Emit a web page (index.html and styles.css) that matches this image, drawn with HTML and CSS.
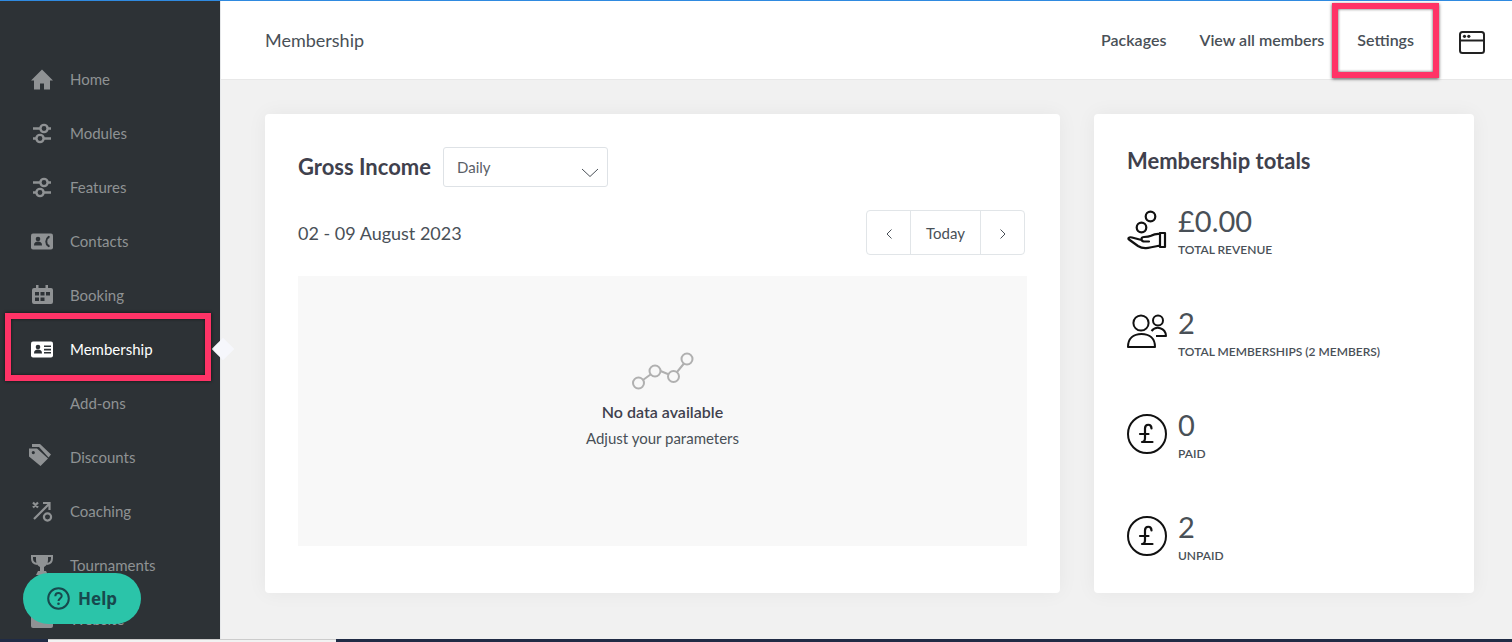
FILE: index.html
```html
<!DOCTYPE html>
<html lang="en">
<head>
<meta charset="utf-8">
<meta name="viewport" content="width=device-width, initial-scale=1">
<title>Membership</title>
<link rel="stylesheet" href="styles.css">
</head>
<body>
<svg class="sprite" aria-hidden="true">
  <symbol id="sliders" viewBox="0 0 22 22">
    <g fill="none" stroke="currentColor" stroke-width="2.400"><path d="M2 6.500h7M17 6.500h3M2 16.500h3M13 16.500h7"/><circle cx="13" cy="6.500" r="3.600"/><circle cx="9" cy="16.500" r="3.600"/></g>
  </symbol>
  <symbol id="pound" viewBox="0 0 40 40">
    <g fill="none" stroke="currentColor" stroke-width="2"><circle cx="20" cy="20" r="19"/><path d="M24.500 14.500c0-5-6.500-5-6.500 0v9.500c0 2.500-1 4-3 4h10.500M13 20h8.500" stroke-width="2.200" stroke-linecap="round" stroke-linejoin="round"/></g>
  </symbol>
</svg>
<div class="app">
  <aside class="sidebar">
    <nav class="nav" aria-label="Main">
      <a class="nav-item" href="#"><svg class="nav-icon" viewBox="0 0 22 22"><path fill="currentColor" d="M11 1.500 22 12.500h-3v9h-6v-6H9v6H3v-9H0z"/></svg>Home</a>
      <a class="nav-item" href="#"><svg class="nav-icon"><use href="#sliders"/></svg>Modules</a>
      <a class="nav-item" href="#"><svg class="nav-icon"><use href="#sliders"/></svg>Features</a>
      <a class="nav-item" href="#"><svg class="nav-icon" viewBox="0 0 22 22"><rect y="3.500" width="22" height="16" rx="2" fill="currentColor"/><g class="cut"><circle cx="7" cy="9" r="2.300"/><path d="M3 15.500c0-3 1.500-4 4-4s4 1 4 4z"/></g><path class="cut-line" d="M18.500 7.500 17.500 7c-3 2-3 7 0 9l1-.5"/></svg>Contacts</a>
      <a class="nav-item" href="#"><svg class="nav-icon" viewBox="0 0 22 22"><path fill="currentColor" d="M5 1h2.500v3h7V1H17v3h3a2 2 0 0 1 2 2v12a2 2 0 0 1-2 2H3a2 2 0 0 1-2-2V6a2 2 0 0 1 2-2h2z"/><path class="cut" d="M4 8h4v3.500H4zM9.500 8h4v3.500h-4zM15 8h4v3.500h-4zM4 13.500h4V17H4zM9.500 13.500h4V17h-4z"/></svg>Booking</a>
      <a class="nav-item nav-item-active" href="#" aria-current="page"><svg class="nav-icon" viewBox="0 0 22 22"><rect y="3.500" width="22" height="16" rx="2" fill="currentColor"/><g class="cut"><circle cx="7" cy="9" r="2.300"/><path d="M3 15.500c0-3 1.500-4 4-4s4 1 4 4zM13 7.500h7v1.600h-7zM13 10.800h7v1.600h-7zM13 14h7v1.600h-7z"/></g></svg>Membership</a>
      <a class="nav-item" href="#"><span class="nav-icon"></span>Add-ons</a>
      <a class="nav-item" href="#"><svg class="nav-icon nav-icon-tag" viewBox="0 0 22 22"><path fill="currentColor" fill-rule="evenodd" d="M0 4.500h8l11 10-7.500 7.500L0 12.500zM4.300 7a1.600 1.600 0 1 0 0 3.200 1.600 1.600 0 0 0 0-3.200z"/><path fill="currentColor" d="M3 0h8l11 10.500-2.500 3L10 3H3z"/></svg>Discounts</a>
      <a class="nav-item" href="#"><svg class="nav-icon" viewBox="0 0 22 22"><path fill="none" stroke="currentColor" stroke-width="2.200" d="M2 2.500l5 5M7 2.500l-5 5M3 19 18 4M12 3h6.500v7"/><circle cx="16.500" cy="17" r="3.600" fill="none" stroke="currentColor" stroke-width="2.200"/></svg>Coaching</a>
      <a class="nav-item" href="#"><svg class="nav-icon" viewBox="0 0 22 22"><path fill="currentColor" d="M5 1h12v5c0 4-2 6-4 7v4h2l2 4H5l2-4h2v-4c-2-1-4-3-4-7z"/><path d="M5 2H1v2.500c0 3 2 5 5 5.500M17 2h4v2.500c0 3-2 5-5 5.500" fill="none" stroke="currentColor" stroke-width="2"/></svg>Tournaments</a>
      <a class="nav-item" href="#"><svg class="nav-icon" viewBox="0 0 22 22"><rect y="2" width="22" height="18" rx="2" fill="currentColor"/></svg>Website</a>
    </nav>
  </aside>
  <div class="page">
    <header class="header">
      <h1 class="header-title">Membership</h1>
      <nav class="header-links" aria-label="Membership">
        <a class="header-link" href="#">Packages</a>
        <a class="header-link" href="#">View all members</a>
        <a class="header-link header-link-marked" href="#">Settings</a>
      </nav>
      <button class="window-button" type="button" aria-label="Open window"><svg class="window-icon" viewBox="0 0 26 23"><g fill="none" stroke="currentColor" stroke-width="2"><rect x="1" y="1" width="24" height="21" rx="2.500"/><path d="M1 9.500h24"/></g><circle cx="5.500" cy="5.300" r="1.600" fill="currentColor"/><circle cx="9.800" cy="5.300" r="1.600" fill="currentColor"/></svg></button>
    </header>
    <main class="content">
      <section class="card income">
        <div class="income-head">
          <label class="card-title" for="period">Gross Income</label>
          <span class="select-wrap">
            <select class="select" id="period"><option>Daily</option><option>Weekly</option><option>Monthly</option></select>
            <svg class="select-arrow" viewBox="0 0 16 10"><path d="M0 1l8 7.500L16 1" fill="none" stroke="currentColor"/></svg>
          </span>
        </div>
        <div class="income-range">
          <p class="range-label">02 - 09 August 2023</p>
          <div class="pager">
            <button class="pager-button" type="button" aria-label="Previous"><svg class="pager-icon" viewBox="0 0 6 10"><path d="M5.500 .5 1 5l4.500 4.500" fill="none" stroke="currentColor"/></svg></button>
            <button class="pager-button pager-today" type="button">Today</button>
            <button class="pager-button" type="button" aria-label="Next"><svg class="pager-icon" viewBox="0 0 6 10"><path d="M.5 .5 5 5 .5 9.500" fill="none" stroke="currentColor"/></svg></button>
          </div>
        </div>
        <div class="empty">
          <svg class="empty-icon" viewBox="0 0 62 38"><g fill="none" stroke="currentColor" stroke-width="2"><circle cx="6.500" cy="31" r="5.500"/><circle cx="23" cy="19" r="5.500"/><circle cx="41.500" cy="24.500" r="5.500"/><circle cx="55" cy="7" r="5.500"/><path d="M11 28l7.500-5.500M28.500 19l8.500 3.500M45 20l7-8.500"/></g></svg>
          <p class="empty-title">No data available</p>
          <p class="empty-text">Adjust your parameters</p>
        </div>
      </section>
      <section class="card totals">
        <h2 class="card-title">Membership totals</h2>
        <ul class="stats">
          <li class="stat"><svg class="stat-icon" viewBox="0 0 40 40"><g fill="none" stroke="currentColor" stroke-width="2.200" stroke-linejoin="round" stroke-linecap="round"><circle cx="23.500" cy="6.500" r="4.800"/><circle cx="14.500" cy="17.500" r="4.800"/><path d="M33 23h5v14h-5zM33 24c-4-.5-6 .2-9 1.800-2 1-4.500 1.200-7 1.200-3 0-3.500 3.500-.5 4.500h5.500M14.500 30 5 27.500c-3-.8-4.500.8-3 2l9 6.500c5 3.200 9 2.500 22-.5"/></g></svg>
            <div><p class="stat-value">£0.00</p><p class="stat-label">TOTAL REVENUE</p></div></li>
          <li class="stat"><svg class="stat-icon" viewBox="0 0 40 40"><g fill="none" stroke="currentColor" stroke-width="2" stroke-linejoin="round"><circle cx="14" cy="11" r="7.600"/><circle cx="31" cy="8.500" r="5"/><path d="M1 35c0-8.500 5.500-13 13.500-13S28 26.500 28 35zM24.500 19c4.500-5.500 14-3.500 14.500 5H29"/></g></svg>
            <div><p class="stat-value">2</p><p class="stat-label">TOTAL MEMBERSHIPS (2 MEMBERS)</p></div></li>
          <li class="stat"><svg class="stat-icon"><use href="#pound"/></svg>
            <div><p class="stat-value">0</p><p class="stat-label">PAID</p></div></li>
          <li class="stat"><svg class="stat-icon"><use href="#pound"/></svg>
            <div><p class="stat-value">2</p><p class="stat-label">UNPAID</p></div></li>
        </ul>
      </section>
    </main>
  </div>
</div>
<div class="taskbar"><div class="taskbar-tab"></div></div>
<button class="help" type="button"><svg class="help-icon" viewBox="0 0 23 23"><g fill="none" stroke="currentColor" stroke-width="2"><circle cx="11.500" cy="11.500" r="10.300"/><path d="M8.300 9.300c0-4.300 6.400-4.300 6.400-.3 0 2.400-3.200 2.300-3.200 5"/></g><circle cx="11.500" cy="16.800" r="1.300" fill="currentColor"/></svg>Help</button>
</body>
</html>
```
FILE: styles.css
```css
* {
  box-sizing: border-box;
}

body {
  margin: 0;
  height: 100vh;
  display: flex;
  flex-direction: column;
  overflow: hidden;
  border-top: 1px solid #2f8ae0;
  background: #f1f1f1;
  color: #495057;
  font: 15px/20px Lato, sans-serif;
}

h1, h2, p, ul {
  margin: 0;
  padding: 0;
}

a {
  color: inherit;
  text-decoration: none;
}

button {
  font: inherit;
  color: inherit;
  cursor: pointer;
}

.sprite {
  position: absolute;
  width: 0;
  height: 0;
}

.app {
  flex: 1;
  min-height: 0;
  display: flex;
}

/* Sidebar */
.sidebar {
  flex: 0 0 220px;
  padding-top: 51px;
  background: #2d3236;
}

.nav {
  display: flex;
  flex-direction: column;
}

.nav-item {
  position: relative;
  height: 54px;
  flex: none;
  display: flex;
  align-items: center;
  gap: 17px;
  padding-left: 31px;
  color: #8f9294;
}

.nav-icon {
  width: 22px;
  height: 22px;
}

.nav-icon-tag {
  margin: 0 2px 4px -2px;
}

.cut {
  fill: #2d3236;
}

.cut-line {
  fill: none;
  stroke: #2d3236;
  stroke-width: 2;
}

.nav-item-active {
  color: #fff;
}

.nav-item-active::before {
  content: "";
  position: absolute;
  right: -11px;
  top: 19px;
  width: 16px;
  height: 16px;
  transform: rotate(45deg);
  background: #f6f7fc;
}

.nav-item-active::after {
  content: "";
  position: absolute;
  inset: -9px 9px -5px 5px;
  border: 6px solid #ff3366;
  box-shadow: 0 0 3px #111, inset 0 0 3px #111;
}

/* Page */
.page {
  flex: 1;
  min-width: 0;
  border-left: 1px solid #e6e8ea;
}

.header {
  height: 79px;
  display: flex;
  align-items: center;
  padding: 0 27px 0 44px;
  background: #fff;
  border-bottom: 1px solid #e8e8e8;
}

.header-title {
  font-size: 18px;
  font-weight: 400;
}

.header-links {
  margin-left: auto;
  display: flex;
  gap: 33px;
  font-size: 16px;
  font-weight: 600;
}

.header-link {
  position: relative;
}

.header-link-marked::after {
  content: "";
  position: absolute;
  inset: -27px -25px -28px;
  border: 6px solid #ff3366;
  box-shadow: 0 1px 3px #555, inset 0 0 3px #555;
}

.window-button {
  display: flex;
  margin-left: 45px;
  padding: 5px 0 0;
  border: 0;
  background: none;
  color: #222;
}

.window-icon {
  width: 26px;
  height: 23px;
}

.content {
  display: grid;
  grid-template-columns: minmax(0, 1fr) 380px;
  gap: 34px;
  padding: 34px 38px 46px 44px;
}

.card {
  border-radius: 4px;
  background: #fff;
  box-shadow: 0 0 20px rgba(0, 0, 0, .05);
}

.card-title {
  color: #3f414d;
  font-size: 22px;
  font-weight: 700;
  line-height: 28px;
}

.income {
  padding: 33px 33px 47px;
}

.income-head {
  display: flex;
  align-items: center;
  gap: 12px;
}

.select-wrap {
  position: relative;
  width: 165px;
}

.select {
  display: block;
  width: 100%;
  height: 40px;
  padding: 0 13px;
  appearance: none;
  border: 1px solid #dee2e6;
  border-radius: 3px;
  background: #fff;
  color: #5a6067;
  font: inherit;
}

.select-arrow {
  position: absolute;
  right: 10px;
  top: 21px;
  width: 16px;
  height: 10px;
  pointer-events: none;
}

.income-range {
  display: flex;
  align-items: center;
  justify-content: space-between;
  padding: 23px 2px 21px 0;
}

.range-label {
  font-size: 18px;
}

.pager {
  display: flex;
  height: 45px;
  border: 1px solid #e1e5e8;
  border-radius: 4px;
}

.pager-button {
  width: 43px;
  padding: 0;
  border: 0;
  background: none;
}

.pager-today {
  width: 71px;
  border: solid #e1e5e8;
  border-width: 0 1px;
}

.pager-icon {
  width: 6px;
  height: 10px;
}

.empty {
  height: 270px;
  display: flex;
  flex-direction: column;
  align-items: center;
  padding-top: 76px;
  background: #f8f8f8;
}

.empty-icon {
  width: 62px;
  height: 38px;
  color: #b0b0b0;
}

.empty-title {
  margin: 12px 0 6px;
  color: #3f414d;
  font-size: 16px;
  font-weight: 600;
}

/* Totals */
.totals {
  padding: 33px 33px 24px;
}

.stats {
  display: flex;
  flex-direction: column;
  gap: 46px;
  margin-top: 29px;
  list-style: none;
}

.stat {
  display: flex;
  align-items: flex-start;
  gap: 11px;
}

.stat-icon {
  width: 40px;
  height: 40px;
  margin-top: 6px;
  color: #111;
}

.stat-value {
  font-size: 29px;
  line-height: 34px;
}

.stat-label {
  margin-top: 2px;
  font-size: 12px;
  font-weight: 600;
}

/* Bottom strip */
.taskbar {
  flex: 0 0 3px;
  padding: 0 0 0 48px;
  background: #202b45;
}

.taskbar-tab {
  width: 288px;
  height: 3px;
  border-top: 1px solid #ccc;
  background: #f2f2f2;
}

.help {
  position: fixed;
  left: 23px;
  bottom: 18px;
  display: flex;
  align-items: center;
  gap: 8px;
  height: 51px;
  padding: 0 24px;
  border: 0;
  border-radius: 26px;
  background: #2bc4a9;
  color: #17494d;
  font: 700 17px/20px "Noto Sans", sans-serif;
}

.help-icon {
  width: 23px;
  height: 23px;
}
```
